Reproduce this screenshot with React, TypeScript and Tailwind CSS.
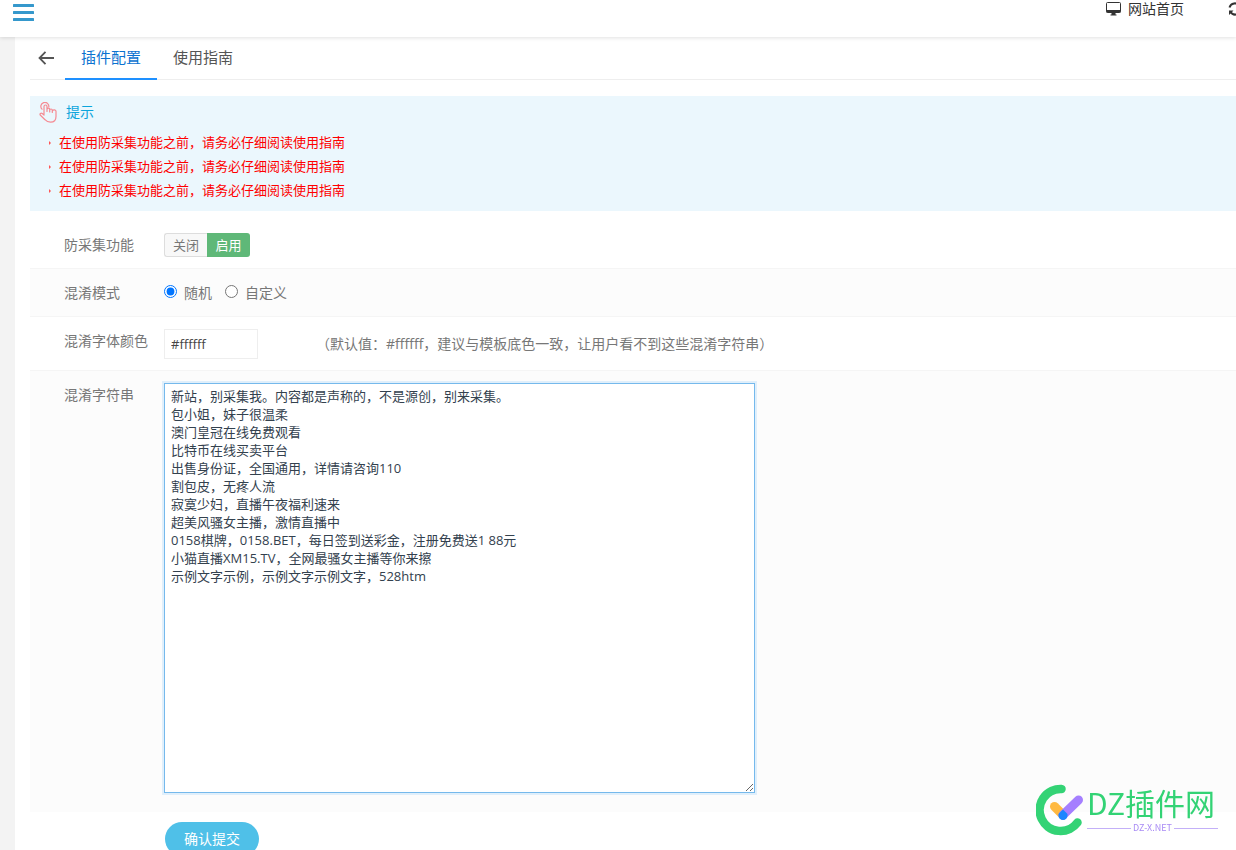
import React, { useState } from "react";

const tips = [
  "在使用防采集功能之前，请务必仔细阅读使用指南",
  "在使用防采集功能之前，请务必仔细阅读使用指南",
  "在使用防采集功能之前，请务必仔细阅读使用指南",
];

const defaultWords = [
  "新站，别采集我。内容都是声称的，不是源创，别来采集。",
  "包小姐，妹子很温柔",
  "澳门皇冠在线免费观看",
  "比特币在线买卖平台",
  "出售身份证，全国通用，详情请咨询110",
  "割包皮，无疼人流",
  "寂寞少妇，直播午夜福利速来",
  "超美风骚女主播，激情直播中",
  "0158棋牌，0158.BET，每日签到送彩金，注册免费送1 88元",
  "小猫直播XM15.TV，全网最骚女主播等你来擦",
  "示例文字示例，示例文字示例文字，528htm",
].join("\n");

const MenuIcon = () => (
  <svg width="22" height="22" viewBox="0 0 22 22" fill="currentColor" aria-hidden="true">
    <rect x="1" y="3" width="21" height="3" rx="0.500" />
    <rect x="1" y="10" width="21" height="3" rx="0.500" />
    <rect x="1" y="17" width="21" height="3" rx="0.500" />
  </svg>
);

const MonitorIcon = () => (
  <svg width="16" height="14" viewBox="0 0 16 14" aria-hidden="true">
    <rect x="0.5" y="0.5" width="14" height="10" rx="1" fill="none" stroke="#333" />
    <path d="M0.5 8h14v2.5h-14zM5.5 11h4v1.5h1V13.5h-6v-1h1z" fill="#333" />
  </svg>
);

const RefreshIcon = () => (
  <svg width="14" height="14" viewBox="0 0 14 14" fill="none" stroke="#333" strokeWidth="2" aria-hidden="true">
    <path d="M1.5 5.5A5.5 5.5 0 0 1 11.5 4M12.5 8.5A5.5 5.5 0 0 1 2.5 10" />
    <path d="M13 1v4.500H8.500zM1 13V8.500h4.500z" fill="#333" stroke="none" />
  </svg>
);

const BackIcon = () => (
  <svg width="16" height="14" viewBox="0 0 16 14" fill="none" stroke="#555" strokeWidth="1.800" aria-hidden="true">
    <path d="M7.500 0.800L1.500 7l6 6.200M1.500 7H16" />
  </svg>
);

const HandIcon = () => (
  <svg width="18" height="21" viewBox="0 0 18 21" fill="none" stroke="#f58a93" strokeWidth="1.200" strokeLinecap="round" strokeLinejoin="round" aria-hidden="true">
    <path d="M3 7.200A4 4 0 1 1 9.800 5" />
    <path d="M5 12.500V4.500a1.500 1.500 0 0 1 3 0V9.500M8 9V7.500a1.300 1.300 0 0 1 2.700 0V10M10.700 9.200V8.300a1.300 1.300 0 0 1 2.600 0v2.200M13.300 10V9.400a1.300 1.300 0 0 1 3.700 0.600v4.500c0 3.500-2 5.700-5.500 5.700-2.500 0-4-.800-5.500-2.500L1.200 13c-.7-1.500.8-2.300 2-1.500L5 13" />
  </svg>
);

const Logo = () => (
  <svg width="48" height="52" viewBox="0 0 48 52" fill="none" strokeLinecap="round" aria-hidden="true">
    <path d="M25.500 5A21 21 0 1 0 41.500 38.500" stroke="#33d375" strokeWidth="8.500" />
    <path d="M18.500 22.500L27 31" stroke="#ffb941" strokeWidth="9" />
    <path d="M27 31L42.500 16" stroke="#a57fff" strokeWidth="9" />
    <path d="M27 25.500l4.500 4.500v1.500a4.500 4.500 0 0 1-9 0v-1.500z" fill="#1a86ff" />
  </svg>
);

const Row = ({ label, htmlFor, className, children }: { label: string; htmlFor?: string; className: string; children: React.ReactNode }) => (
  <div className={`flex pl-[34px] ${className}`}>
    <label htmlFor={htmlFor} className="w-[100px] shrink-0 leading-6">{label}</label>
    {children}
  </div>
);

const App = () => {
  const [enabled, setEnabled] = useState(true);
  const [mode, setMode] = useState("random");
  const [color, setColor] = useState("#ffffff");
  const [words, setWords] = useState(defaultWords);

  return (
    <div className="flex h-screen flex-col overflow-hidden bg-[#f3f3f3] font-['Open_Sans','Noto_Sans_CJK_SC',sans-serif] text-sm text-[#777]">

      <header className="z-10 flex h-[37px] shrink-0 items-start justify-between bg-white pl-3 shadow-[0_1px_4px_rgba(0,0,0,0.12)]">
        <button type="button" aria-label="菜单" className="pt-px text-[#3598cc]"><MenuIcon /></button>
        <nav className="-mr-1.5 flex text-[#333]">
          <a href="#" className="flex items-center gap-[6px] pr-11 leading-[18px]"><MonitorIcon /> 网站首页</a>
          <a href="#" aria-label="刷新" className="flex items-center"><RefreshIcon /></a>
        </nav>
      </header>

      <main className="ml-[15px] grow bg-white pl-[15px]">

        <nav className="flex h-[43px] border-b border-[#eee] text-[15px]">
          <a href="#" aria-label="返回" className="flex w-[35px] items-center pl-2"><BackIcon /></a>
          <a href="#" className="h-[43px] border-b-2 border-[#1e90ff] px-4 leading-10 text-[#0b72d0]">插件配置</a>
          <a href="#" className="px-4 leading-10 text-[#555]">使用指南</a>
        </nav>

        <section className="mt-4 h-[115px] bg-[#ebf7fd] pl-[9px] pt-1">
          <h2 className="flex h-[30px] items-center gap-[9px] pb-[6px] text-[#0ba5dc]"><HandIcon /> 提示</h2>
          <ul className="text-[13px] leading-6 text-[#f00]">
            {tips.map((tip, i) => (
              <li key={i} className="flex items-center gap-2 pl-[10px]">
                <svg width="2" height="6" viewBox="0 0 2 6" fill="#f55" aria-hidden="true"><path d="M0 2l2 2-2 2z" /></svg>
                {tip}
              </li>
            ))}
          </ul>
        </section>

        <form onSubmit={(e) => e.preventDefault()}>
          <Row label="防采集功能" className="border-b border-[#f5f5f5] pb-[11px] pt-[22px]">
            <div className="flex h-6 text-[13px]">
              <button type="button" onClick={() => setEnabled(false)} className={`w-[43px] rounded-l-[3px] ${enabled ? "border border-r-0 border-[#ddd] bg-[#f8f8f8]" : "bg-[#5fb878] text-white"}`}>关闭</button>
              <button type="button" onClick={() => setEnabled(true)} className={`w-[43px] rounded-r-[3px] ${enabled ? "bg-[#5fb878] text-white" : "border border-l-0 border-[#ddd] bg-[#f8f8f8]"}`}>启用</button>
            </div>
          </Row>

          <Row label="混淆模式" className="border-b border-[#f5f5f5] bg-[#fcfcfc] pb-[11px] pt-3">
            <div className="flex items-center gap-[13px]">
              <label className="flex items-center gap-[7px]">
                <input type="radio" name="mode" checked={mode === "random"} onChange={() => setMode("random")} className="mb-1 size-[13px]" />
                随机
              </label>
              <label className="flex items-center gap-[7px]">
                <input type="radio" name="mode" checked={mode === "custom"} onChange={() => setMode("custom")} className="mb-1 size-[13px]" />
                自定义
              </label>
            </div>
          </Row>

          <Row label="混淆字体颜色" htmlFor="color" className="border-b border-[#f5f5f5] pb-[11px] pt-3">
            <input id="color" type="text" value={color} onChange={(e) => setColor(e.target.value)} className="h-[30px] w-[94px] border border-[#eee] bg-white px-[6px] text-[13px] text-[#444] outline-none" />
            <span className="ml-[58px] leading-[30px]">（默认值：#ffffff，建议与模板底色一致，让用户看不到这些混淆字符串）</span>
          </Row>

          <Row label="混淆字符串" htmlFor="words" className="bg-[#fcfcfc] pb-[19px] pt-3">
            <textarea
              id="words"
              autoFocus
              spellCheck={false}
              value={words}
              onChange={(e) => setWords(e.target.value)}
              className="h-[410px] w-[591px] border border-[#75b9ec] bg-white px-[6px] py-[3px] text-[13px] leading-[18px] text-[#33414e] shadow-[0_0_0_2px_#e0effb] outline-none"
            />
          </Row>

          <button type="submit" className="ml-[135px] mt-[10px] h-[34px] w-[94px] rounded-full bg-[#4fc0e8] text-white">确认提交</button>
        </form>
      </main>

      {/* site mark floats over the form */}
      <div className="fixed bottom-[14px] right-[18px] flex items-center gap-[3px]">
        <Logo />
        <div className="w-[131px] font-['Noto_Sans_CJK_SC',sans-serif]">
          <div className="h-9 whitespace-nowrap text-[30px] leading-[30px] text-[#33d375]">DZ插件网</div>
          <div className="flex items-center gap-[2px] text-[9px] leading-[10px] text-[#a98cf5]">
            <span className="h-px grow bg-[#c3b0f8]" />
            DZ-X.NET
            <span className="h-px grow bg-[#c3b0f8]" />
          </div>
        </div>
      </div>
    </div>
  );
};

export default App;
